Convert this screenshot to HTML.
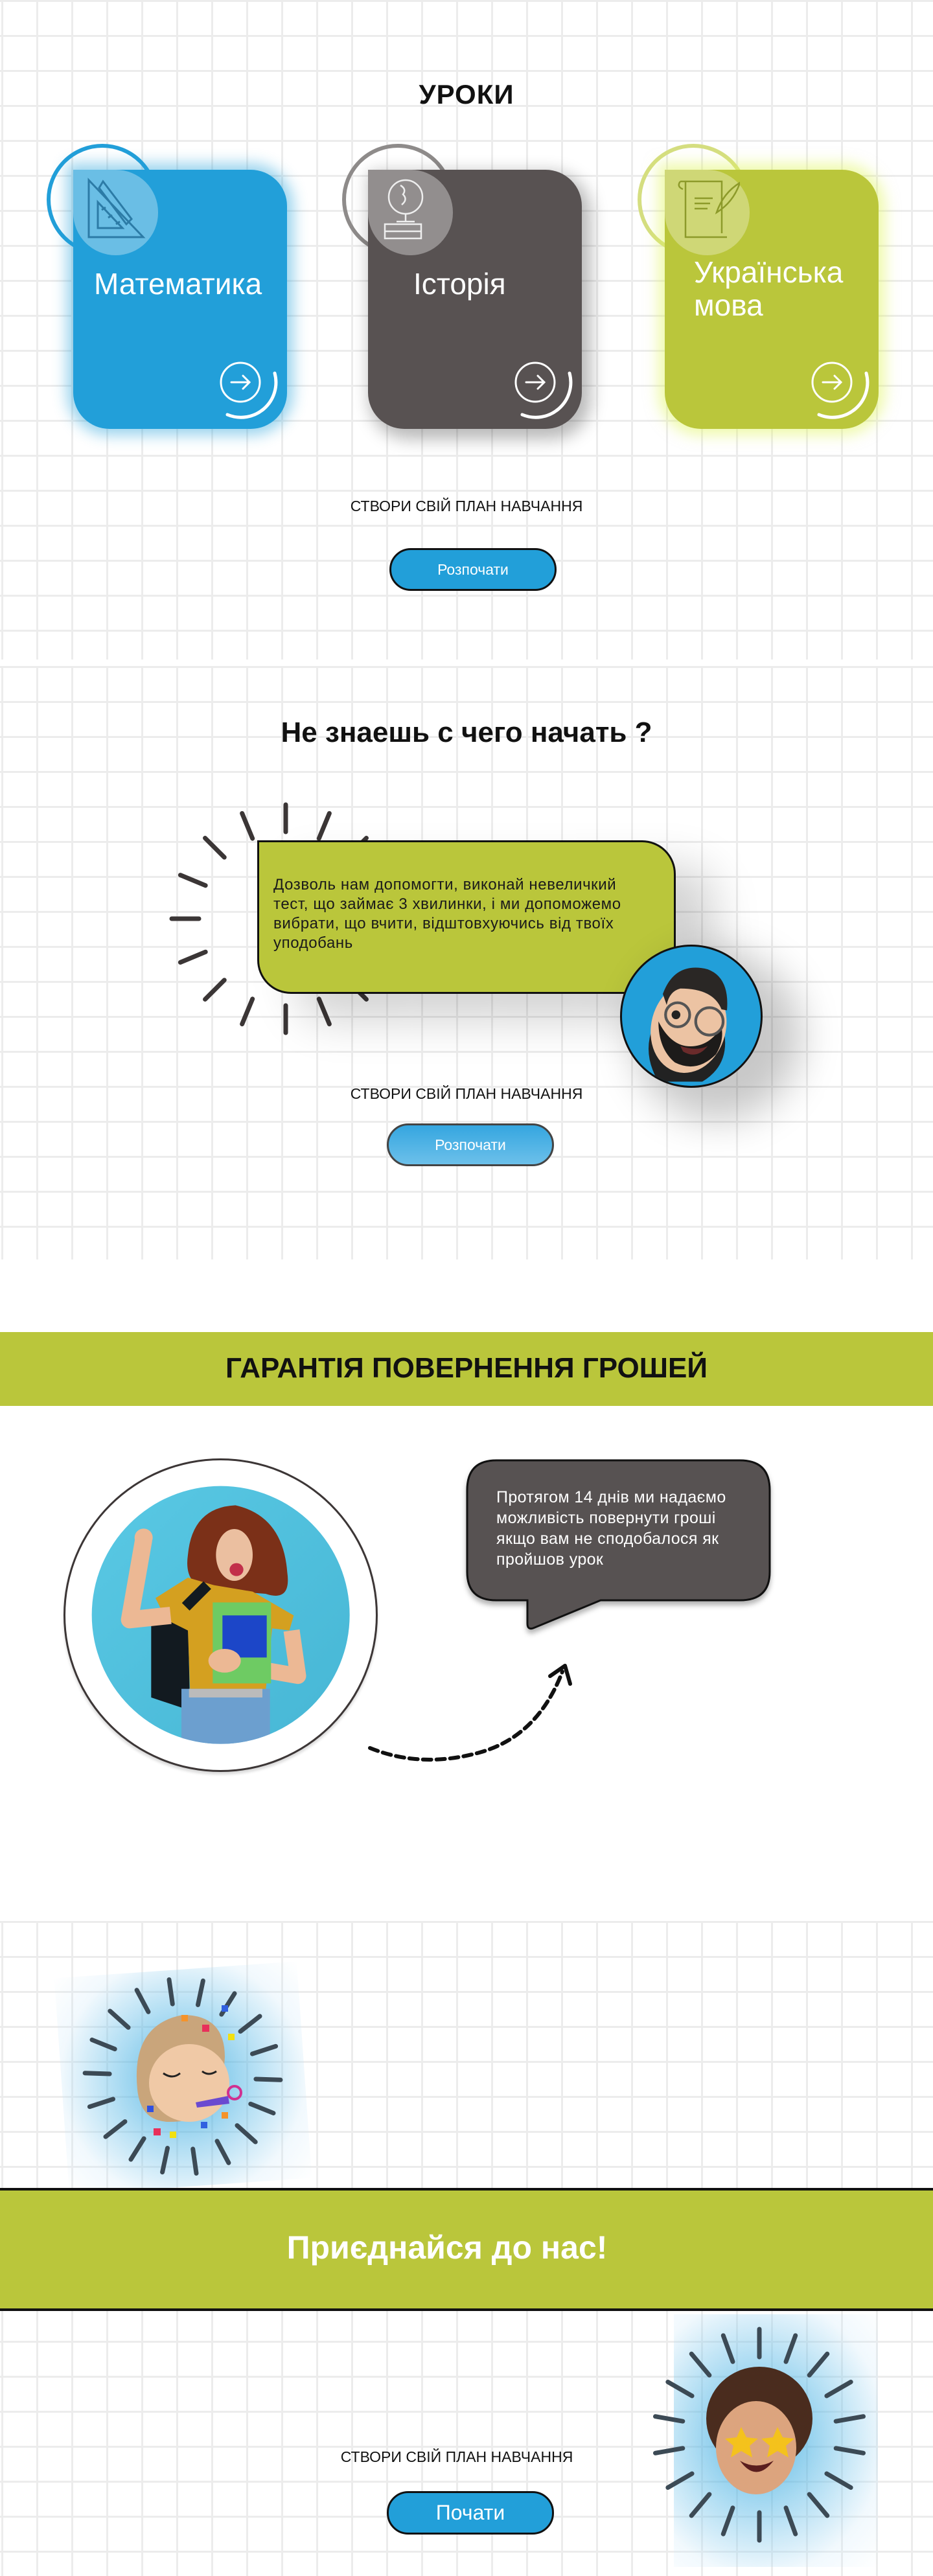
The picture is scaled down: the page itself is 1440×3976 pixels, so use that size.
<!DOCTYPE html>
<html><head><meta charset="utf-8">
<style>
*{margin:0;padding:0;box-sizing:border-box}
html,body{width:1440px;height:3976px;background:#fff;overflow:hidden}
body{position:relative;font-family:"Liberation Sans","Noto Sans CJK SC",sans-serif;color:#111}
.grid{position:absolute;left:0;width:1440px;
 background-image:linear-gradient(to right,#ececec 3px,transparent 3px),linear-gradient(to bottom,#ececec 3px,transparent 3px);
 background-size:54px 54px;background-position:2px 0}
.abs{position:absolute}
.h{position:absolute;left:0;width:1440px;text-align:center;font-weight:bold;white-space:nowrap}
.card{position:absolute;top:262px;width:330px;height:400px;border-radius:0 56px 56px 56px;overflow:hidden}
.card .t{position:absolute;color:#fff;font-size:46px;font-weight:500;line-height:51px;white-space:nowrap}
.ring{position:absolute;top:222px;width:172px;height:172px;border-radius:50%;border:6px solid}
.plan{position:absolute;left:0;width:1440px;text-align:center;font-size:23px;white-space:nowrap;color:#111}
.btn{position:absolute;width:258px;height:66px;border-radius:33px;border:3px solid #111;background:#229fd9;color:#fff;text-align:center;font-size:23px;line-height:60px}
</style></head><body>

<!-- Section 1 -->
<div class="grid" style="top:0;height:1018px"></div>
<div class="h" style="top:122px;font-size:42px;letter-spacing:1px">УРОКИ</div>

<div class="ring" style="left:72px;border-color:#229fd9"></div>
<div class="ring" style="left:528px;border-color:#8e8b8a"></div>
<div class="ring" style="left:984px;border-color:#d5de80"></div>

<div class="card" style="left:113px;background:#229fd9;box-shadow:0 0 22px 10px rgba(34,159,217,.45)">
 <div class="abs" style="left:0;top:0;width:131px;height:132px;background:rgba(255,255,255,.33);border-radius:0 66px 66px 66px"></div>
 <svg class="abs" style="left:20px;top:12px" width="100" height="100" viewBox="0 0 100 100" fill="none" stroke="#2c7ba6" stroke-width="3"><path d="M4 4 L4 92 L88 92 Z"/><path d="M18 38 L18 78 L56 78 Z"/><path d="M26 6 L70 64 L62 72 L20 16 Z"/><path d="M24 50 l6 -4 M34 62 l6-4 M46 72 l6-4"/></svg>
 <div class="t" style="left:32px;top:151px">Математика</div>
 <svg class="abs" style="left:220px;top:288px" width="110" height="112" viewBox="0 0 110 112" fill="none" stroke="#fff"><circle cx="38" cy="40" r="30" stroke-width="3"/><path d="M24 40 H52 M42 30 L52 40 L42 50" stroke-width="3" stroke-linecap="round"/><path d="M91 26 A54 54 0 0 1 18 90" stroke-width="5" stroke-linecap="round"/></svg>
</div>

<div class="card" style="left:568px;background:#585252;box-shadow:8px 10px 26px 6px rgba(0,0,0,.28)">
 <div class="abs" style="left:0;top:0;width:131px;height:132px;background:rgba(255,255,255,.35);border-radius:0 66px 66px 66px"></div>
 <svg class="abs" style="left:22px;top:10px" width="100" height="100" viewBox="0 0 100 100" fill="none" stroke="#eee" stroke-width="2.5"><circle cx="36" cy="32" r="26"/><path d="M36 58 V70 M22 70 H50 M4 74 H60 V96 H4 Z M4 85 H60"/><path d="M28 14 q10 6 4 14 q8 8 -2 16"/></svg>
 <div class="t" style="left:70px;top:151px">Історія</div>
 <svg class="abs" style="left:220px;top:288px" width="110" height="112" viewBox="0 0 110 112" fill="none" stroke="#fff"><circle cx="38" cy="40" r="30" stroke-width="3"/><path d="M24 40 H52 M42 30 L52 40 L42 50" stroke-width="3" stroke-linecap="round"/><path d="M91 26 A54 54 0 0 1 18 90" stroke-width="5" stroke-linecap="round"/></svg>
</div>

<div class="card" style="left:1026px;background:#bac63b;box-shadow:0 0 22px 10px rgba(224,245,90,.5)">
 <div class="abs" style="left:0;top:0;width:131px;height:132px;background:rgba(255,255,255,.3);border-radius:0 66px 66px 66px"></div>
 <svg class="abs" style="left:16px;top:14px" width="100" height="100" viewBox="0 0 100 100" fill="none" stroke="#8d9a2a" stroke-width="2.5"><path d="M8 4 H72 V84 M16 4 V90 H80 M8 4 q-6 8 4 12 M30 30 H58 M30 38 H54 M30 46 H50 M64 52 q10 -30 36 -46 q-10 30 -36 46 Z"/></svg>
 <div class="t" style="left:45px;top:133px">Українська<br>мова</div>
 <svg class="abs" style="left:220px;top:288px" width="110" height="112" viewBox="0 0 110 112" fill="none" stroke="#fff"><circle cx="38" cy="40" r="30" stroke-width="3"/><path d="M24 40 H52 M42 30 L52 40 L42 50" stroke-width="3" stroke-linecap="round"/><path d="M91 26 A54 54 0 0 1 18 90" stroke-width="5" stroke-linecap="round"/></svg>
</div>

<div class="plan" style="top:768px">СТВОРИ СВІЙ ПЛАН НАВЧАННЯ</div>
<div class="btn" style="left:601px;top:846px">Розпочати</div>

<!-- Section 2 -->
<div class="grid" style="top:1028px;height:916px"></div>
<div class="h" style="top:1106px;font-size:44px">Не знаешь с чего начать ?</div>

<svg class="abs" style="left:241px;top:1218px" width="400" height="400" viewBox="-200 -200 400 400">
 <g stroke="#3b3636" stroke-width="7" stroke-linecap="round">
  <line x1="0" y1="-134" x2="0" y2="-176"/>
  <line x1="0" y1="-134" x2="0" y2="-176" transform="rotate(22.5)"/>
  <line x1="0" y1="-134" x2="0" y2="-176" transform="rotate(45)"/>
  <line x1="0" y1="-134" x2="0" y2="-176" transform="rotate(-22.5)"/>
  <line x1="0" y1="-134" x2="0" y2="-176" transform="rotate(-45)"/>
  <line x1="0" y1="-134" x2="0" y2="-176" transform="rotate(-67.5)"/>
  <line x1="0" y1="-134" x2="0" y2="-176" transform="rotate(-90)"/>
  <line x1="0" y1="-134" x2="0" y2="-176" transform="rotate(-112.5)"/>
  <line x1="0" y1="-134" x2="0" y2="-176" transform="rotate(-135)"/>
  <line x1="0" y1="-134" x2="0" y2="-176" transform="rotate(-157.5)"/>
  <line x1="0" y1="-134" x2="0" y2="-176" transform="rotate(180)"/>
  <line x1="0" y1="-134" x2="0" y2="-176" transform="rotate(157.5)"/>
  <line x1="0" y1="-134" x2="0" y2="-176" transform="rotate(135)"/>
 </g>
</svg>

<div class="abs" style="left:397px;top:1297px;width:646px;height:237px;background:#bac63b;border:3px solid #111;border-radius:0 52px 0 52px;box-shadow:60px 40px 70px rgba(0,0,0,.18)"></div>
<div class="abs" style="left:422px;top:1351px;font-size:24px;line-height:30px;color:#1a1a1a;white-space:nowrap;letter-spacing:.6px">Дозволь нам допомогти, виконай невеличкий<br>тест, що займає 3 хвилинки, і ми допоможемо<br>вибрати, що вчити, відштовхуючись від твоїх<br>уподобань</div>

<div class="abs" style="left:957px;top:1458px;width:220px;height:221px;border-radius:50%;background:#229fd9;border:3px solid #111;box-shadow:40px 30px 60px 20px rgba(0,0,0,.22);overflow:hidden">
 <svg width="220" height="220" viewBox="0 0 260 260" style="position:absolute;left:-3px;top:-3px">
  <path d="M70 250 Q40 200 60 150 L190 160 Q200 220 150 250 Z" fill="#222"/>
  <ellipse cx="125" cy="150" rx="68" ry="85" fill="#ecc3a3" transform="rotate(15 125 150)"/>
  <path d="M70 140 Q70 190 100 215 Q140 235 175 200 Q190 175 185 150 Q160 190 120 185 Q90 180 70 140Z" fill="#1d1b1a"/>
  <path d="M78 90 Q100 30 160 45 Q200 60 195 120 L185 118 Q170 80 110 80 Q90 85 85 110 Z" fill="#2a2725"/>
  <circle cx="105" cy="128" r="22" fill="none" stroke="#555" stroke-width="5"/>
  <circle cx="163" cy="140" r="25" fill="none" stroke="#555" stroke-width="5"/>
  <circle cx="102" cy="128" r="8" fill="#222"/>
  <path d="M110 185 Q140 195 160 185 Q140 210 115 195Z" fill="#6b2b2b"/>
 </svg>
</div>

<div class="plan" style="top:1675px">СТВОРИ СВІЙ ПЛАН НАВЧАННЯ</div>
<div class="btn" style="left:597px;top:1734px;background:linear-gradient(#35a6e0,#6cc0ea);border-color:#444">Розпочати</div>

<!-- Section 3 -->
<div class="abs" style="left:0;top:2056px;width:1440px;height:114px;background:#bac63b"></div>
<div class="h" style="top:2087px;font-size:44px;color:#111">ГАРАНТІЯ ПОВЕРНЕННЯ ГРОШЕЙ</div>

<div class="abs" style="left:98px;top:2251px;width:485px;height:484px;border-radius:50%;border:3px solid #3c3636;background:#fff;box-shadow:0 4px 4px rgba(0,0,0,.15)"></div>
<svg class="abs" style="left:90px;top:2240px" width="500" height="500" viewBox="0 0 1500 1500">
 <defs><clipPath id="cp"><circle cx="752" cy="758" r="597"/></clipPath>
 <linearGradient id="bg" x1="0" y1="0" x2="1" y2="1"><stop offset="0" stop-color="#5ccbe6"/><stop offset="1" stop-color="#44b4d3"/></linearGradient></defs>
 <g clip-path="url(#cp)">
  <rect x="0" y="0" width="1500" height="1500" fill="url(#bg)"/>
  <path d="M820 250 Q620 260 600 480 Q580 620 700 640 L960 660 Q1080 700 1060 560 Q1040 300 820 250Z" fill="#7b3018"/>
  <path d="M430 800 L600 760 L610 1200 L430 1140Z" fill="#121a20"/>
  <path d="M450 680 L600 585 L720 620 L900 650 L1090 760 L1070 830 L990 820 L960 1110 L610 1110 L600 830 L500 780Z" fill="#d4a020"/>
  <path d="M395 410 L330 780 L520 760" fill="none" stroke="#ecb894" stroke-width="80" stroke-linejoin="round"/>
  <circle cx="395" cy="400" r="42" fill="#ecb894"/>
  <path d="M590 720 L690 620" stroke="#121a20" stroke-width="50"/>
  <ellipse cx="815" cy="480" rx="85" ry="120" fill="#ebbfa0"/>
  <ellipse cx="825" cy="548" rx="32" ry="30" fill="#c2304a"/>
  <path d="M1080 830 L1110 1040 L880 1000" fill="none" stroke="#ecb894" stroke-width="75" stroke-linejoin="round"/>
  <rect x="715" y="700" width="270" height="375" fill="#6ecb63"/>
  <rect x="760" y="760" width="205" height="195" fill="#1c46c8"/>
  <ellipse cx="770" cy="970" rx="75" ry="55" fill="#ecb894"/>
  <rect x="570" y="1100" width="410" height="260" fill="#6c9fcf"/>
  <rect x="605" y="1100" width="340" height="40" fill="#bbb"/>
 </g>
</svg>

<svg class="abs" style="left:700px;top:2240px" width="520" height="300" viewBox="0 0 520 300">
 <path d="M66 14 H442 Q488 14 488 60 V186 Q488 230 442 230 H227 L123 273 Q114 276 114 266 V230 H66 Q21 230 21 186 V60 Q21 14 66 14Z" fill="#575252" stroke="#111" stroke-width="3" style="filter:drop-shadow(0 6px 4px rgba(0,0,0,.3))"/>
</svg>
<div class="abs" style="left:766px;top:2295px;font-size:25px;line-height:32px;color:#fff;white-space:nowrap;letter-spacing:.4px">Протягом 14 днів ми надаємо<br>можливість повернути гроші<br>якщо вам не сподобалося як<br>пройшов урок</div>

<svg class="abs" style="left:540px;top:2540px" width="380" height="200" viewBox="540 2540 380 200">
 <path d="M571 2698 Q650 2730 740 2705 Q830 2680 868 2580" fill="none" stroke="#111" stroke-width="6" stroke-dasharray="13 8" stroke-linecap="round"/>
 <path d="M849 2587 L872 2571 L880 2599" fill="none" stroke="#111" stroke-width="6" stroke-linecap="round" stroke-linejoin="round"/>
</svg>

<!-- Section 4 -->
<div class="grid" style="top:2965px;height:1011px"></div>

<div class="abs" style="left:95px;top:3040px;width:375px;height:335px;transform:rotate(-4deg);background:radial-gradient(circle at 50% 50%,rgba(34,159,217,.75) 0,rgba(90,185,230,.5) 40%,rgba(200,230,248,.25) 75%,rgba(255,255,255,0) 100%)"></div>
<svg class="abs" style="left:82px;top:3005px" width="400" height="400" viewBox="-200 -200 400 400">
 <g stroke="#3c4a55" stroke-width="7" stroke-linecap="round" transform="rotate(-8)">
  <line x1="0" y1="-113" x2="0" y2="-151"/>
  <line x1="0" y1="-113" x2="0" y2="-151" transform="rotate(20)"/><line x1="0" y1="-113" x2="0" y2="-151" transform="rotate(40)"/>
  <line x1="0" y1="-113" x2="0" y2="-151" transform="rotate(60)"/><line x1="0" y1="-113" x2="0" y2="-151" transform="rotate(80)"/>
  <line x1="0" y1="-113" x2="0" y2="-151" transform="rotate(100)"/><line x1="0" y1="-113" x2="0" y2="-151" transform="rotate(120)"/>
  <line x1="0" y1="-113" x2="0" y2="-151" transform="rotate(140)"/><line x1="0" y1="-113" x2="0" y2="-151" transform="rotate(160)"/>
  <line x1="0" y1="-113" x2="0" y2="-151" transform="rotate(180)"/><line x1="0" y1="-113" x2="0" y2="-151" transform="rotate(200)"/>
  <line x1="0" y1="-113" x2="0" y2="-151" transform="rotate(220)"/><line x1="0" y1="-113" x2="0" y2="-151" transform="rotate(240)"/>
  <line x1="0" y1="-113" x2="0" y2="-151" transform="rotate(260)"/><line x1="0" y1="-113" x2="0" y2="-151" transform="rotate(280)"/>
  <line x1="0" y1="-113" x2="0" y2="-151" transform="rotate(300)"/><line x1="0" y1="-113" x2="0" y2="-151" transform="rotate(320)"/>
  <line x1="0" y1="-113" x2="0" y2="-151" transform="rotate(340)"/>
 </g>
 <path d="M-70 20 Q-80 -80 0 -95 Q65 -95 65 -30 L60 40 Q30 70 -20 70 Q-65 70 -70 20Z" fill="#c9a57b"/>
 <ellipse cx="10" cy="10" rx="62" ry="60" fill="#f0c9a6"/>
 <path d="M-30 -5 q14 10 26 0 M30 -8 q10 8 22 0" stroke="#222" stroke-width="3" fill="none"/>
 <path d="M20 40 L70 30 L72 42 L22 48Z" fill="#6a4ad0"/>
 <circle cx="80" cy="25" r="10" fill="none" stroke="#d03090" stroke-width="4"/>
 <rect x="-2" y="-95" width="10" height="10" fill="#f5932a"/><rect x="30" y="-80" width="11" height="11" fill="#e8305a"/>
 <rect x="70" y="-66" width="10" height="10" fill="#f2e010"/><rect x="-55" y="45" width="10" height="10" fill="#3050e0"/>
 <rect x="-45" y="80" width="11" height="11" fill="#e8305a"/><rect x="-20" y="85" width="10" height="10" fill="#f2e010"/>
 <rect x="28" y="70" width="10" height="10" fill="#3060e0"/><rect x="60" y="55" width="10" height="10" fill="#f5932a"/>
 <rect x="60" y="-110" width="10" height="10" fill="#3060e0"/>
</svg>

<div class="abs" style="left:0;top:3377px;width:1440px;height:190px;background:#bac63b;border-top:4px solid #111;border-bottom:4px solid #111"></div>
<div class="h" style="top:3440px;font-size:50px;color:#fff;width:1380px">Приєднайся до нас!</div>

<div class="abs" style="left:1040px;top:3572px;width:315px;height:390px;background:radial-gradient(ellipse at 42% 48%,rgba(34,159,217,.75) 0,rgba(90,185,230,.5) 40%,rgba(200,230,248,.25) 75%,rgba(255,255,255,0) 100%)"></div>
<svg class="abs" style="left:972px;top:3558px" width="400" height="400" viewBox="-200 -200 400 400">
 <g stroke="#3c4a55" stroke-width="7" stroke-linecap="round">
  <line x1="0" y1="-120" x2="0" y2="-163"/>
  <line x1="0" y1="-120" x2="0" y2="-163" transform="rotate(20)"/><line x1="0" y1="-120" x2="0" y2="-163" transform="rotate(40)"/>
  <line x1="0" y1="-120" x2="0" y2="-163" transform="rotate(60)"/><line x1="0" y1="-120" x2="0" y2="-163" transform="rotate(80)"/>
  <line x1="0" y1="-120" x2="0" y2="-163" transform="rotate(100)"/><line x1="0" y1="-120" x2="0" y2="-163" transform="rotate(120)"/>
  <line x1="0" y1="-120" x2="0" y2="-163" transform="rotate(140)"/><line x1="0" y1="-120" x2="0" y2="-163" transform="rotate(160)"/>
  <line x1="0" y1="-120" x2="0" y2="-163" transform="rotate(180)"/><line x1="0" y1="-120" x2="0" y2="-163" transform="rotate(200)"/>
  <line x1="0" y1="-120" x2="0" y2="-163" transform="rotate(220)"/><line x1="0" y1="-120" x2="0" y2="-163" transform="rotate(240)"/>
  <line x1="0" y1="-120" x2="0" y2="-163" transform="rotate(260)"/><line x1="0" y1="-120" x2="0" y2="-163" transform="rotate(280)"/>
  <line x1="0" y1="-120" x2="0" y2="-163" transform="rotate(300)"/><line x1="0" y1="-120" x2="0" y2="-163" transform="rotate(320)"/>
  <line x1="0" y1="-120" x2="0" y2="-163" transform="rotate(340)"/>
 </g>
 <ellipse cx="0" cy="-25" rx="82" ry="80" fill="#4a2c1e"/>
 <ellipse cx="-5" cy="20" rx="62" ry="72" fill="#dca47e"/>
 <path d="M-30 40 Q-5 75 22 40 Q-5 55 -30 40Z" fill="#5a1e1e"/>
 <path d="M-28 -12 l8 16 l18 2 l-13 11 l4 18 l-17 -10 l-16 10 l4 -18 l-13 -11 l18 -2Z" fill="#f4c21c"/>
 <path d="M28 -12 l8 16 l18 2 l-13 11 l4 18 l-17 -10 l-16 10 l4 -18 l-13 -11 l18 -2Z" fill="#f4c21c"/>
</svg>

<div class="plan" style="top:3779px;width:1410px">СТВОРИ СВІЙ ПЛАН НАВЧАННЯ</div>
<div class="btn" style="left:597px;top:3845px;height:67px;font-size:32px;line-height:61px">Почати</div>

</body></html>
